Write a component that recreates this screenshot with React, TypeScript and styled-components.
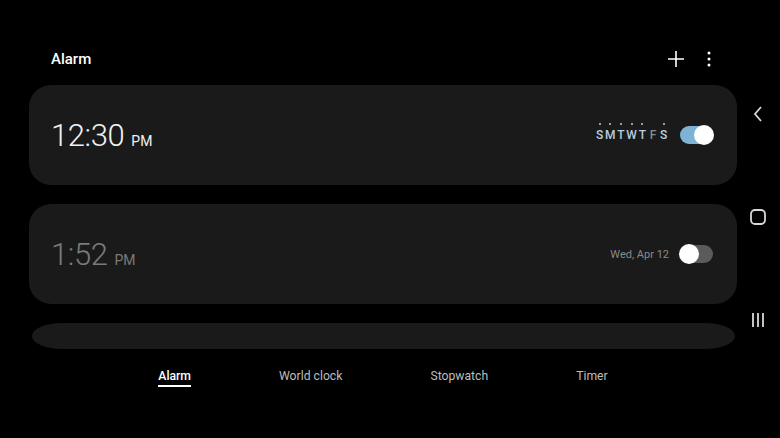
import React from "react";
import styled, { createGlobalStyle } from "styled-components";

const GlobalStyle = createGlobalStyle`
  html, body {
    margin: 0;
    padding: 0;
    background: #000;
  }
  body {
    font-family: Roboto, "Noto Sans", sans-serif;
    color: #fff;
  }
`;

const Screen = styled.div`
  width: 780px;
  height: 438px;
  display: flex;
  background: #000;
  overflow: hidden;
`;

const Main = styled.div`
  width: 708px;
  padding: 38px 4px 0 29px;
  display: flex;
  flex-direction: column;
`;

const Header = styled.div`
  height: 42px;
  display: flex;
  align-items: center;
  padding: 0 18px 0 22px;
`;

const Title = styled.h1`
  flex: 1;
  margin: 0;
  font-size: 15px;
  font-weight: 500;
  color: #fff;
`;

const HeaderActions = styled.div`
  display: flex;
  align-items: center;
  gap: 13px;
`;

const IconButton = styled.button`
  background: none;
  border: 0;
  padding: 0;
  width: 20px;
  height: 20px;
  display: flex;
  align-items: center;
  justify-content: center;
  color: #fff;
`;

const List = styled.div`
  margin-top: 5px;
  display: flex;
  flex-direction: column;
  gap: 19px;
`;

const Card = styled.div`
  height: 100px;
  border-radius: 22px;
  background: #1a1a1a;
  display: flex;
  align-items: center;
  padding: 0 24px 0 22px;
`;

const PeekCard = styled.div`
  height: 26px;
  margin: 0 2px 0 3px;
  background: #1a1a1a;
  border-radius: 30px / 13px;
`;

const Time = styled.div<{ $off?: boolean }>`
  flex: 1;
  display: flex;
  align-items: baseline;
  gap: 7px;
  color: ${(p) => (p.$off ? "#7a7a7a" : "#f2f2f2")};
`;

const Clock = styled.span`
  font-size: 31px;
  font-weight: 300;
  letter-spacing: -0.4px;
`;

const Meridiem = styled.span`
  font-size: 14px;
  font-weight: 400;
`;

const Days = styled.div`
  display: flex;
  margin-right: 11px;
`;

const Day = styled.span<{ $on?: boolean }>`
  position: relative;
  width: 10.7px;
  text-align: center;
  font-size: 12px;
  font-weight: 500;
  color: ${(p) => (p.$on ? "#b4cfe0" : "#8c8c8c")};
  &::before {
    content: "";
    display: ${(p) => (p.$on ? "block" : "none")};
    position: absolute;
    left: 50%;
    top: -5px;
    width: 2px;
    height: 2px;
    margin-left: -1px;
    border-radius: 50%;
    background: #b4cfe0;
  }
`;

const DateLabel = styled.span`
  font-size: 11px;
  color: #8a8a8a;
  margin-right: 11px;
`;

const Switch = styled.div<{ $on?: boolean }>`
  position: relative;
  width: 33px;
  height: 18px;
  border-radius: 9px;
  background: ${(p) => (p.$on ? "#7eb3d6" : "#5b5b5b")};
  &::after {
    content: "";
    position: absolute;
    top: -1px;
    ${(p) => (p.$on ? "right: -1px;" : "left: -1px;")}
    width: 20px;
    height: 20px;
    border-radius: 50%;
    background: #fff;
  }
`;

const Tabs = styled.nav`
  margin-top: 17px;
  height: 20px;
  display: flex;
  justify-content: center;
  align-items: center;
  gap: 88px;
`;

const Tab = styled.span<{ $active?: boolean }>`
  position: relative;
  font-size: 12.2px;
  color: ${(p) => (p.$active ? "#fff" : "#bdbdbd")};
  font-weight: ${(p) => (p.$active ? 500 : 400)};
  &::after {
    content: "";
    display: ${(p) => (p.$active ? "block" : "none")};
    position: absolute;
    left: 0;
    right: 0;
    bottom: -4px;
    height: 2px;
    background: #fff;
  }
`;

const NavBar = styled.div`
  width: 34px;
  display: flex;
  flex-direction: column;
  align-items: center;
  padding-top: 104px;
  gap: 83px;
`;

const NavIcon = styled.div`
  width: 20px;
  height: 20px;
  display: flex;
  align-items: center;
  justify-content: center;
  color: #d8d8d8;
`;

const DAYS = [
  { d: "S", on: true },
  { d: "M", on: true },
  { d: "T", on: true },
  { d: "W", on: true },
  { d: "T", on: true },
  { d: "F", on: false },
  { d: "S", on: true },
];

export default function App() {
  return (
    <>
      <GlobalStyle />
      <Screen>
        <Main>
          <Header>
            <Title>Alarm</Title>
            <HeaderActions>
              <IconButton aria-label="Add">
                <svg width="18" height="18" viewBox="0 0 18 18">
                  <path d="M9 1v16M1 9h16" stroke="#fff" strokeWidth="1.6" />
                </svg>
              </IconButton>
              <IconButton aria-label="More">
                <svg width="4" height="16" viewBox="0 0 4 16">
                  <circle cx="2" cy="2" r="1.5" fill="#fff" />
                  <circle cx="2" cy="8" r="1.5" fill="#fff" />
                  <circle cx="2" cy="14" r="1.5" fill="#fff" />
                </svg>
              </IconButton>
            </HeaderActions>
          </Header>

          <List>
            <Card>
              <Time>
                <Clock>12:30</Clock>
                <Meridiem>PM</Meridiem>
              </Time>
              <Days>
                {DAYS.map((x, i) => (
                  <Day key={i} $on={x.on}>
                    {x.d}
                  </Day>
                ))}
              </Days>
              <Switch $on />
            </Card>
            <Card>
              <Time $off>
                <Clock>1:52</Clock>
                <Meridiem>PM</Meridiem>
              </Time>
              <DateLabel>Wed, Apr 12</DateLabel>
              <Switch />
            </Card>
            <PeekCard />
          </List>

          <Tabs>
            <Tab $active>Alarm</Tab>
            <Tab>World clock</Tab>
            <Tab>Stopwatch</Tab>
            <Tab>Timer</Tab>
          </Tabs>
        </Main>

        <NavBar>
          <NavIcon>
            <svg width="10" height="16" viewBox="0 0 10 16">
              <path d="M8 1L2 8l6 7" fill="none" stroke="#d8d8d8" strokeWidth="1.8" />
            </svg>
          </NavIcon>
          <NavIcon>
            <svg width="16" height="16" viewBox="0 0 16 16">
              <rect x="1" y="1" width="14" height="14" rx="4" fill="none" stroke="#d8d8d8" strokeWidth="1.8" />
            </svg>
          </NavIcon>
          <NavIcon>
            <svg width="14" height="16" viewBox="0 0 14 16">
              <path d="M2 1v14M7 1v14M12 1v14" stroke="#d8d8d8" strokeWidth="1.8" />
            </svg>
          </NavIcon>
        </NavBar>
      </Screen>
    </>
  );
}
